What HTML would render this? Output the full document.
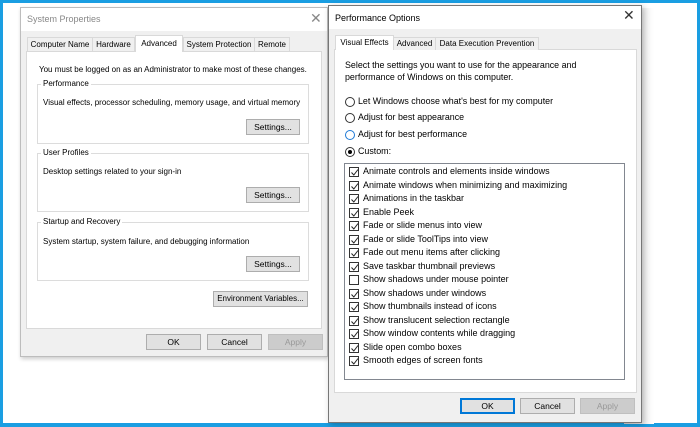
<!DOCTYPE html>
<html><head><style>
*{margin:0;padding:0;box-sizing:border-box}
body{width:700px;height:427px;background:#1a9ee2;position:relative;overflow:hidden;font-family:"Liberation Sans",sans-serif;font-size:9px;color:#000}
.a{position:absolute;white-space:nowrap}
.win{position:absolute;background:#f0f0f0;border:1px solid #aaa}
.btn{position:absolute;background:#e1e1e1;border:1px solid #adadad;text-align:center;font-size:8.5px;line-height:14px;white-space:nowrap}
.tab{position:absolute;background:#f0f0f0;border:1px solid #d9d9d9;border-bottom:none;text-align:center;line-height:13px;font-size:8px;white-space:nowrap}
.grp{position:absolute;border:1px solid #dcdcdc}
.lbl{position:absolute;background:#fff;padding:0 2px;font-size:8px;white-space:nowrap}
.cb{position:absolute;left:4px;width:10px;height:10px;border:1px solid #333;background:#fff}
.cb svg{position:absolute;left:0;top:0}
.it{position:absolute;left:18px;font-size:9px;white-space:nowrap;line-height:11px}
.rd{position:absolute;width:10px;height:10px;border:1px solid #333;border-radius:50%;background:#fff}
.s{font-size:8px}
</style></head><body>
<div class="a" style="left:3px;top:3px;width:694px;height:420px;background:#fff"></div>
<div class="a" style="left:624px;top:8px;width:30px;height:416px;background:linear-gradient(90deg,#d8d8d8,#fff)"></div>

<!-- System Properties -->
<div class="win" style="left:20px;top:7px;width:308px;height:350px;border-color:#bdbdbd;box-shadow:1px 2px 4px rgba(0,0,0,.2)">
  <div class="a" style="left:0;top:0;width:306px;height:23px;background:#fff"></div>
  <div class="a" style="left:6px;top:6px;color:#888;font-size:9px">System Properties</div>
  <div class="a" style="left:289px;top:2px;color:#888;font-size:14px">✕</div>
  <div class="a" style="left:5px;top:43px;width:296px;height:278px;background:#fff;border:1px solid #d9d9d9"></div>
  <div class="tab" style="left:6px;top:29px;width:66px;height:14px">Computer Name</div>
  <div class="tab" style="left:71px;top:29px;width:43px;height:14px">Hardware</div>
  <div class="tab" style="left:114px;top:27px;width:48px;height:17px;background:#fff;border-color:#d9d9d9;line-height:15px">Advanced</div>
  <div class="tab" style="left:162px;top:29px;width:72px;height:14px">System Protection</div>
  <div class="tab" style="left:233px;top:29px;width:36px;height:14px">Remote</div>
  <div class="a s" style="left:18px;top:57px">You must be logged on as an Administrator to make most of these changes.</div>
  <div class="grp" style="left:16px;top:76px;width:272px;height:60px"></div>
  <div class="lbl" style="left:20px;top:71px">Performance</div>
  <div class="a s" style="left:22px;top:90px">Visual effects, processor scheduling, memory usage, and virtual memory</div>
  <div class="btn" style="left:225px;top:111px;width:54px;height:16px">Settings...</div>
  <div class="grp" style="left:16px;top:145px;width:272px;height:59px"></div>
  <div class="lbl" style="left:20px;top:140px">User Profiles</div>
  <div class="a s" style="left:22px;top:159px">Desktop settings related to your sign-in</div>
  <div class="btn" style="left:225px;top:179px;width:54px;height:16px">Settings...</div>
  <div class="grp" style="left:16px;top:214px;width:272px;height:59px"></div>
  <div class="lbl" style="left:20px;top:209px">Startup and Recovery</div>
  <div class="a s" style="left:22px;top:229px">System startup, system failure, and debugging information</div>
  <div class="btn" style="left:225px;top:248px;width:54px;height:16px">Settings...</div>
  <div class="btn" style="left:192px;top:283px;width:95px;height:16px;font-size:8px">Environment Variables...</div>
  <div class="btn" style="left:125px;top:326px;width:55px;height:16px">OK</div>
  <div class="btn" style="left:186px;top:326px;width:55px;height:16px">Cancel</div>
  <div class="btn" style="left:247px;top:326px;width:55px;height:16px;color:#999;background:#ccc;border-color:#bfbfbf">Apply</div>
</div>

<!-- Performance Options -->
<div class="win" style="left:328px;top:5px;width:314px;height:418px;border-color:#777;box-shadow:2px 2px 6px rgba(0,0,0,.25)">
  <div class="a" style="left:0;top:0;width:312px;height:23px;background:#fff"></div>
  <div class="a" style="left:6px;top:7px;font-size:9px">Performance Options</div>
  <div class="a" style="left:294px;top:1px;font-size:14px;color:#333">✕</div>
  <div class="a" style="left:5px;top:43px;width:303px;height:344px;background:#fff;border:1px solid #d9d9d9"></div>
  <div class="tab" style="left:6px;top:29px;width:59px;height:15px;background:#fff;line-height:13px">Visual Effects</div>
  <div class="tab" style="left:64px;top:31px;width:43px;height:13px;line-height:12px">Advanced</div>
  <div class="tab" style="left:106px;top:31px;width:104px;height:13px;line-height:12px">Data Execution Prevention</div>
  <div class="a" style="left:16px;top:53px;font-size:8.9px;line-height:12px">Select the settings you want to use for the appearance and<br>performance of Windows on this computer.</div>
  <div class="rd" style="left:16px;top:91px"></div><div class="a" style="left:29px;top:90px;font-size:8.9px">Let Windows choose what's best for my computer</div>
  <div class="rd" style="left:16px;top:107px"></div><div class="a" style="left:29px;top:106px;font-size:8.9px">Adjust for best appearance</div>
  <div class="rd" style="left:16px;top:124px;border-color:#1e7ad6"></div><div class="a" style="left:29px;top:123px;font-size:8.9px">Adjust for best performance</div>
  <div class="rd" style="left:16px;top:141px"><div class="a" style="left:2px;top:2px;width:4px;height:4px;border-radius:50%;background:#000"></div></div><div class="a" style="left:29px;top:140px;font-size:8.9px">Custom:</div>
  <div class="a" style="left:15px;top:157px;width:281px;height:217px;background:#fff;border:1px solid #828790">
    <div class="cb" style="top:3px"><svg width="10" height="10"><path d="M1.5 4.5 L3.8 7 L8 1.5" fill="none" stroke="#222" stroke-width="1"/></svg></div><div class="it" style="top:2px">Animate controls and elements inside windows</div>
    <div class="cb" style="top:16.5px"><svg width="10" height="10"><path d="M1.5 4.5 L3.8 7 L8 1.5" fill="none" stroke="#222" stroke-width="1"/></svg></div><div class="it" style="top:15.5px">Animate windows when minimizing and maximizing</div>
    <div class="cb" style="top:30px"><svg width="10" height="10"><path d="M1.5 4.5 L3.8 7 L8 1.5" fill="none" stroke="#222" stroke-width="1"/></svg></div><div class="it" style="top:29px">Animations in the taskbar</div>
    <div class="cb" style="top:43.5px"><svg width="10" height="10"><path d="M1.5 4.5 L3.8 7 L8 1.5" fill="none" stroke="#222" stroke-width="1"/></svg></div><div class="it" style="top:42.5px">Enable Peek</div>
    <div class="cb" style="top:57px"><svg width="10" height="10"><path d="M1.5 4.5 L3.8 7 L8 1.5" fill="none" stroke="#222" stroke-width="1"/></svg></div><div class="it" style="top:56px">Fade or slide menus into view</div>
    <div class="cb" style="top:70.5px"><svg width="10" height="10"><path d="M1.5 4.5 L3.8 7 L8 1.5" fill="none" stroke="#222" stroke-width="1"/></svg></div><div class="it" style="top:69.5px">Fade or slide ToolTips into view</div>
    <div class="cb" style="top:84px"><svg width="10" height="10"><path d="M1.5 4.5 L3.8 7 L8 1.5" fill="none" stroke="#222" stroke-width="1"/></svg></div><div class="it" style="top:83px">Fade out menu items after clicking</div>
    <div class="cb" style="top:97.5px"><svg width="10" height="10"><path d="M1.5 4.5 L3.8 7 L8 1.5" fill="none" stroke="#222" stroke-width="1"/></svg></div><div class="it" style="top:96.5px">Save taskbar thumbnail previews</div>
    <div class="cb" style="top:111px"></div><div class="it" style="top:110px">Show shadows under mouse pointer</div>
    <div class="cb" style="top:124.5px"><svg width="10" height="10"><path d="M1.5 4.5 L3.8 7 L8 1.5" fill="none" stroke="#222" stroke-width="1"/></svg></div><div class="it" style="top:123.5px">Show shadows under windows</div>
    <div class="cb" style="top:138px"><svg width="10" height="10"><path d="M1.5 4.5 L3.8 7 L8 1.5" fill="none" stroke="#222" stroke-width="1"/></svg></div><div class="it" style="top:137px">Show thumbnails instead of icons</div>
    <div class="cb" style="top:151.5px"><svg width="10" height="10"><path d="M1.5 4.5 L3.8 7 L8 1.5" fill="none" stroke="#222" stroke-width="1"/></svg></div><div class="it" style="top:150.5px">Show translucent selection rectangle</div>
    <div class="cb" style="top:165px"><svg width="10" height="10"><path d="M1.5 4.5 L3.8 7 L8 1.5" fill="none" stroke="#222" stroke-width="1"/></svg></div><div class="it" style="top:164px">Show window contents while dragging</div>
    <div class="cb" style="top:178.5px"><svg width="10" height="10"><path d="M1.5 4.5 L3.8 7 L8 1.5" fill="none" stroke="#222" stroke-width="1"/></svg></div><div class="it" style="top:177.5px">Slide open combo boxes</div>
    <div class="cb" style="top:192px"><svg width="10" height="10"><path d="M1.5 4.5 L3.8 7 L8 1.5" fill="none" stroke="#222" stroke-width="1"/></svg></div><div class="it" style="top:191px">Smooth edges of screen fonts</div>
  </div>
  <div class="btn" style="left:131px;top:392px;width:55px;height:16px;border:2px solid #0078d7;line-height:12px">OK</div>
  <div class="btn" style="left:191px;top:392px;width:55px;height:16px">Cancel</div>
  <div class="btn" style="left:251px;top:392px;width:55px;height:16px;color:#999;background:#ccc;border-color:#bfbfbf">Apply</div>
</div>
</body></html>
